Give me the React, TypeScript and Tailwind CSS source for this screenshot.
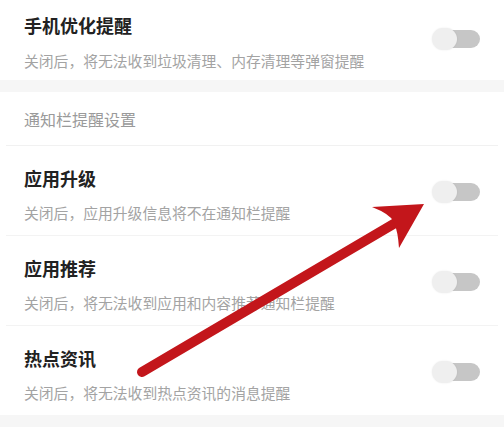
import React from 'react'

const font = { fontFamily: '"Noto Sans CJK SC", "Noto Sans", sans-serif' }

const Toggle = () => (
  <div className="relative w-[48px] h-[22px] shrink-0">
    {/* track */}
    <div className="absolute right-0 top-[2px] w-[40px] h-[18px] rounded-full bg-[#c6c6c6]" />
    {/* knob */}
    <div className="absolute left-0 top-0 w-[25px] h-[22px] rounded-full bg-[#efefef] shadow-[0_0_2px_rgba(0,0,0,0.08)]" />
  </div>
)

interface RowProps {
  title: string
  desc: string
  first?: boolean
}

const SettingRow: React.FC<RowProps> = ({ title, desc, first }) => (
  <div
    className={`flex items-center justify-between pl-[24px] pr-[24px] ${
      first ? 'pt-[13px] pb-[9px]' : 'pt-[20px] pb-[12px]'
    }`}
  >
    <div className={`flex flex-col ${first ? 'gap-[14px]' : 'gap-[13px]'}`}>
      <span className="text-[18px] leading-[24px] font-bold text-[#222]">{title}</span>
      <span className="text-[14.8px] leading-[20px] text-[#a3a3a3]">{desc}</span>
    </div>
    <div className="mb-[6px]">
      <Toggle />
    </div>
  </div>
)

export default function App() {
  return (
    <div className="relative w-[504px] h-[439px] overflow-hidden bg-white" style={font}>
      <SettingRow first title="手机优化提醒" desc="关闭后，将无法收到垃圾清理、内存清理等弹窗提醒" />

      <div className="h-[12px] bg-[#f6f6f6]" />

      <div className="h-[53px] flex items-center pl-[24px] text-[16px] text-[#9a9a9a]">
        通知栏提醒设置
      </div>
      <div className="h-px mx-[6px] bg-[#f1f1f1]" />

      <SettingRow title="应用升级" desc="关闭后，应用升级信息将不在通知栏提醒" />
      <div className="h-px mx-[6px] bg-[#f3f3f3]" />
      <SettingRow title="应用推荐" desc="关闭后，将无法收到应用和内容推荐通知栏提醒" />
      <div className="h-px mx-[6px] bg-[#f3f3f3]" />
      <SettingRow title="热点资讯" desc="关闭后，将无法收到热点资讯的消息提醒" />

      <div className="h-[12px] bg-[#f6f6f6]" />

      <div className="h-[40px] flex items-center pl-[24px] pt-[12px] text-[16px] text-[#9a9a9a]">
        其他提醒设置
      </div>

      {/* red annotation arrow */}
      <svg className="absolute inset-0 pointer-events-none" width="504" height="439" viewBox="0 0 504 439">
        <line x1="142" y1="372" x2="402" y2="219" stroke="#c3161b" strokeWidth="10" strokeLinecap="round" />
        <path d="M424 204 L372 207 Q390 214 394 222 Q398 232 399 248 Z" fill="#c3161b" />
      </svg>
    </div>
  )
}
